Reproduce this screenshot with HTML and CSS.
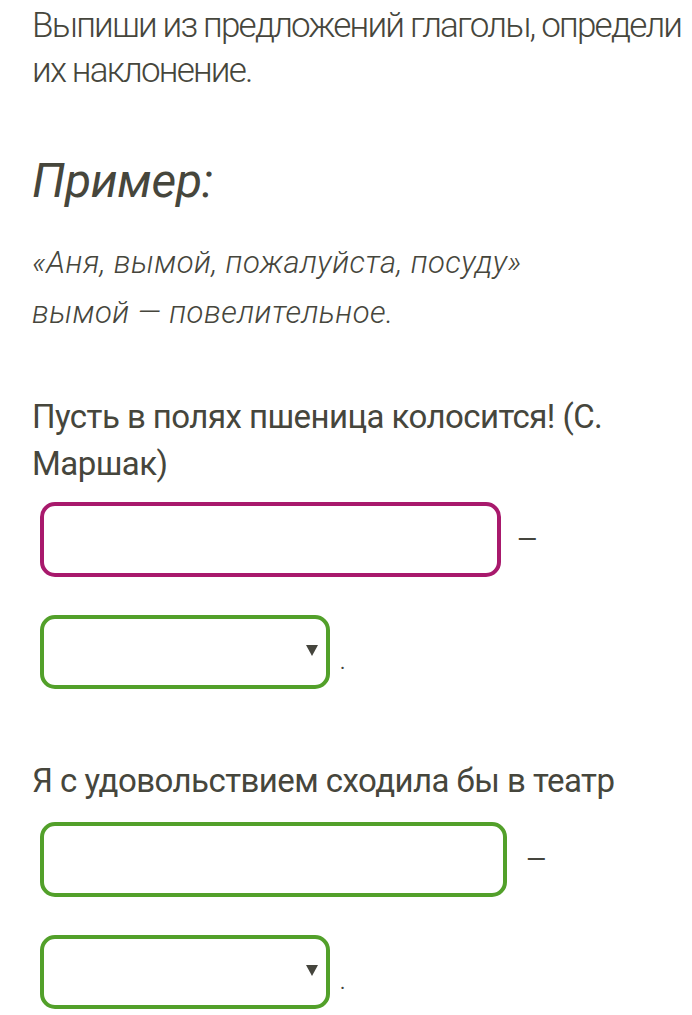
FILE: index.html
```html
<!DOCTYPE html>
<html lang="ru">
<head>
<meta charset="utf-8">
<title>Наклонение глаголов</title>
<link rel="stylesheet" href="styles.css">
</head>
<body>
<main class="task">
  <p class="lead">Выпиши из предложений глаголы, определи их наклонение.</p>
  <h2 class="example-title">Пример:</h2>
  <p class="example">«Аня, вымой, пожалуйста, посуду»<br>вымой — повелительное.</p>

  <section class="item item-first">
    <p class="sentence">Пусть в полях пшеница колосится! (С. Маршак)</p>
    <div class="answer">
      <input class="field field-wrong" type="text" aria-label="Глагол">
      <span class="dash">—</span>
    </div>
    <div class="answer answer-select">
      <div class="select" role="combobox" aria-label="Наклонение">
        <svg class="arrow" width="12" height="11" viewBox="0 0 12 11"><polygon points="0,0 12,0 6,11" fill="#45453d"/></svg>
      </div>
      <span class="dot">.</span>
    </div>
  </section>

  <section class="item item-second">
    <p class="sentence">Я с удовольствием сходила бы в театр</p>
    <div class="answer">
      <input class="field field-ok field-wide" type="text" aria-label="Глагол">
      <span class="dash">—</span>
    </div>
    <div class="answer answer-select">
      <div class="select" role="combobox" aria-label="Наклонение">
        <svg class="arrow" width="12" height="11" viewBox="0 0 12 11"><polygon points="0,0 12,0 6,11" fill="#45453d"/></svg>
      </div>
      <span class="dot">.</span>
    </div>
  </section>
</main>
</body>
</html>
```
FILE: styles.css
```css
* { box-sizing: border-box; }

html, body {
  margin: 0;
  padding: 0;
  background: #ffffff;
}

body {
  font-family: Roboto, "Liberation Sans", sans-serif;
  color: #46463c;
}

.task {
  padding: 3px 0 0 32px;
}

.lead {
  margin: 0;
  font-size: 35px;
  line-height: 45px;
  font-weight: 300;
  letter-spacing: -1.8px;
}

.example-title {
  margin: 60px 0 0;
  font-size: 48px;
  line-height: 56px;
  font-weight: 400;
  font-style: italic;
  letter-spacing: -0.3px;
}

.example {
  margin: 29px 0 0;
  font-size: 31px;
  line-height: 50px;
  font-weight: 300;
  font-style: italic;
  letter-spacing: 0.45px;
}

.item-first { margin-top: 55px; }
.item-second { margin-top: 68px; }

.sentence {
  margin: 0;
  font-size: 33px;
  line-height: 47px;
  font-weight: 400;
  letter-spacing: -0.55px;
}

.answer {
  display: flex;
  align-items: center;
  margin-top: 15px;
  padding-left: 8px;
}

.answer-select { margin-top: 38px; }
.item-second .answer { margin-top: 18px; }
.item-second .answer-select { margin-top: 38px; }

.field {
  width: 461px;
  height: 75px;
  margin: 0;
  border: 4px solid #52a02a;
  border-radius: 15px;
  background: #fff;
  font: inherit;
  outline: none;
}

.field-wrong { border-color: #a8196c; }
.field-wide { width: 467px; }

.dash {
  margin-left: 16px;
  font-size: 26px;
  line-height: 1;
  color: #45453d;
  position: relative;
  top: -1px;
}

.item-second .dash { margin-left: 19px; }

.select {
  width: 290px;
  height: 74px;
  border: 4px solid #52a02a;
  border-radius: 15px;
  background: #fff;
  display: flex;
  align-items: center;
  justify-content: flex-end;
  padding: 0 8px 4px 0;
}

.arrow { display: block; }

.dot {
  margin-left: 10px;
  margin-top: 20px;
  font-size: 20px;
  line-height: 1;
  color: #45453d;
}
```
